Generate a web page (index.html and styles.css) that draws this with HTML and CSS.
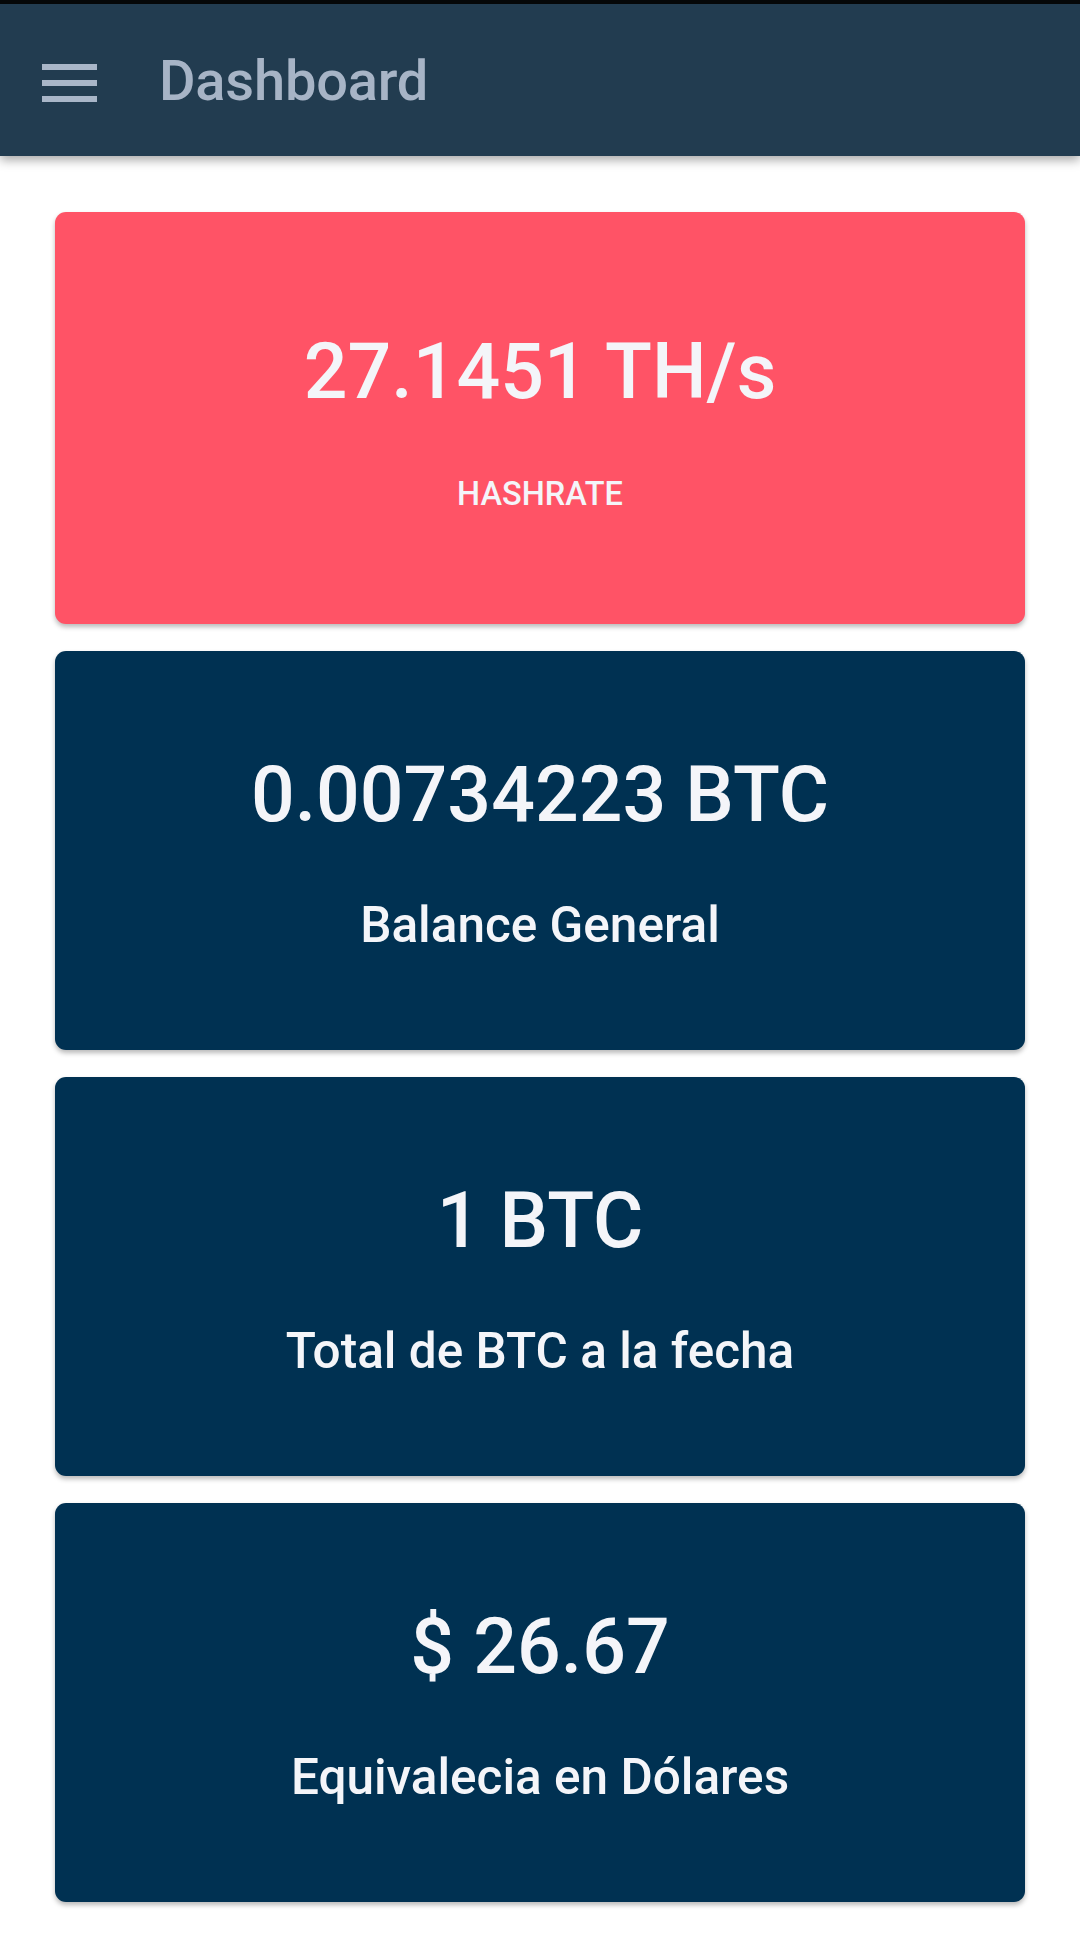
FILE: index.html
```html
<!DOCTYPE html>
<html lang="es">
<head>
<meta charset="utf-8">
<title>Dashboard</title>
<link rel="stylesheet" href="styles.css">
</head>
<body>
<header class="appbar">
  <button class="menu-btn" aria-label="Menú">
    <svg class="menu-icon" viewBox="0 0 55 38" width="55" height="38" aria-hidden="true">
      <rect x="0" y="0" width="55" height="6" fill="currentColor"/>
      <rect x="0" y="16" width="55" height="6" fill="currentColor"/>
      <rect x="0" y="32" width="55" height="6" fill="currentColor"/>
    </svg>
  </button>
  <h1 class="appbar-title">Dashboard</h1>
</header>
<main class="content">
  <section class="card card--hash">
    <div class="card-value">27.1451 TH/s</div>
    <div class="card-label card-label--caps">HASHRATE</div>
  </section>
  <section class="card card--dark">
    <div class="card-value">0.00734223 BTC</div>
    <div class="card-label">Balance General</div>
  </section>
  <section class="card card--dark">
    <div class="card-value">1 BTC</div>
    <div class="card-label">Total de BTC a la fecha</div>
  </section>
  <section class="card card--dark">
    <div class="card-value">$ 26.67</div>
    <div class="card-label">Equivalecia en Dólares</div>
  </section>
</main>
</body>
</html>
```

FILE: styles.css
```css
* { box-sizing: border-box; }

html, body {
  margin: 0;
  padding: 0;
  background: #ffffff;
  font-family: Roboto, "Noto Sans", "Liberation Sans", sans-serif;
}

.appbar {
  height: 156px;
  border-top: 4px solid #050708;
  background: #223c50;
  display: flex;
  align-items: center;
  padding-left: 42px;
  gap: 62px;
  box-shadow: 0 4px 10px rgba(0, 0, 0, 0.35);
  position: relative;
  z-index: 2;
}

.menu-btn {
  background: none;
  border: 0;
  padding: 0;
  margin: 6px 0 0 0;
  color: #a9b6c8;
  display: flex;
}

.menu-icon { display: block; }

.appbar-title {
  margin: 2px 0 0 0;
  font-size: 56px;
  font-weight: 500;
  color: #a7b4c6;
  line-height: 1;
  letter-spacing: -0.2px;
}

.content {
  padding: 56px 55px 40px 55px;
  display: flex;
  flex-direction: column;
  gap: 27px;
}

.card {
  border-radius: 11px;
  display: flex;
  flex-direction: column;
  align-items: center;
  color: #f4f5f9;
  box-shadow: 0 3px 5px rgba(0, 0, 0, 0.28);
}

.card--hash {
  background: #ff5366;
  height: 412px;
  padding-top: 115px;
}

.card--dark {
  background: #003152;
  height: 399px;
  padding-top: 99px;
}

.card-value {
  font-size: 77px;
  font-weight: 500;
  line-height: 90px;
  white-space: nowrap;
}

.card-label {
  font-size: 49.5px;
  font-weight: 500;
  line-height: 60px;
  margin-top: 55px;
  white-space: nowrap;
}

.card-label--caps {
  font-size: 32.5px;
  line-height: 40px;
  margin-top: 57px;
}
```
